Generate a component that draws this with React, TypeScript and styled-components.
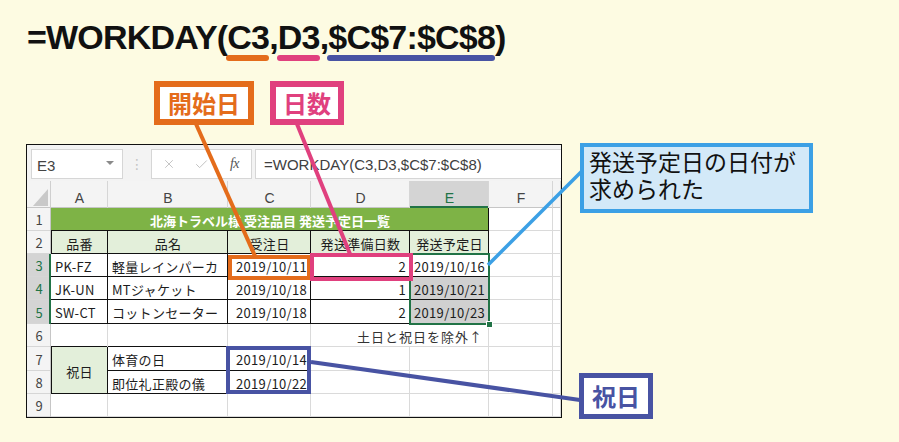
import React from 'react';
import styled, { createGlobalStyle } from 'styled-components';
import { X, Check } from 'lucide-react';

const ORANGE = '#E46C1B';
const PINK = '#E0407E';
const NAVY = '#4853A3';
const SKY = '#3CA0E5';
const GREEN = '#7EB346';
const LIGHT_GREEN = '#E3EFDA';
const GRID = '#DADADA';
const INK = '#1c1c1c';
const XL_GREEN = '#217346';

const Global = createGlobalStyle`
  html, body { margin: 0; padding: 0; background: #FDFBE2; }
  body { font-family: "Noto Sans CJK JP", "Noto Sans", sans-serif; }
`;

const Page = styled.div`
  position: relative;
  width: 899px;
  height: 442px;
  box-sizing: border-box;
  padding: 20px 0 0 27px;
  background: #FDFBE2;
  overflow: hidden;
`;

const Formula = styled.div`
  font-family: "Liberation Sans", Arial, sans-serif;
  font-weight: 700;
  font-size: 34px;
  line-height: 34px;
  height: 34px;
  letter-spacing: -0.8px;
  color: #111;
  white-space: nowrap;
`;

const Ref = styled.span<{ $c: string }>`
  position: relative;
  &::after {
    content: '';
    position: absolute;
    left: -1px;
    right: 0;
    bottom: -5px;
    height: 6px;
    border-radius: 3px;
    background: ${p => p.$c};
  }
`;

const Frame = styled.div`
  margin: 90px 0 0 -1px;
  width: 536px;
  height: 274px;
  box-sizing: border-box;
  border: 1px solid #111;
  background: #fff;
  display: flex;
  flex-direction: column;
`;

const FormulaStrip = styled.div`
  flex: none;
  height: 36px;
  box-sizing: border-box;
  padding: 4px 0 0 4px;
  background: #F3F3F3;
  display: flex;
  align-items: flex-start;
`;

const NameBox = styled.div`
  width: 92px;
  height: 30px;
  box-sizing: border-box;
  background: #fff;
  border: 1px solid #D6D6D6;
  display: flex;
  align-items: center;
  justify-content: space-between;
  padding: 2px 8px 0 5px;
  font-family: "Liberation Sans", Arial, sans-serif;
  font-size: 15px;
  color: #444;
`;

const DropArrow = styled.span`
  width: 0;
  height: 0;
  border-left: 4px solid transparent;
  border-right: 4px solid transparent;
  border-top: 4px solid #8a8a8a;
  margin-bottom: 4px;
`;

const Dots = styled.div`
  width: 28px;
  height: 30px;
  display: flex;
  align-items: center;
  justify-content: center;
  color: #C4C4C4;
  font-family: "DejaVu Sans", sans-serif;
  font-size: 14px;
`;

const FnBox = styled.div`
  width: 101px;
  height: 30px;
  box-sizing: border-box;
  background: #fff;
  border: 1px solid #D6D6D6;
  display: grid;
  grid-template-columns: repeat(3, 1fr);
  align-items: center;
  justify-items: center;
  color: #BDBDBD;
`;

const Fx = styled.span`
  font-family: "Liberation Serif", serif;
  font-style: italic;
  font-size: 14px;
  color: #555;
  letter-spacing: -0.5px;
`;

const FormulaInput = styled.div`
  flex: 1;
  margin-left: 3px;
  height: 30px;
  box-sizing: border-box;
  background: #fff;
  border: 1px solid #D6D6D6;
  border-right: none;
  display: flex;
  align-items: center;
  padding: 1px 0 0 8px;
  font-family: "Liberation Sans", Arial, sans-serif;
  font-size: 15px;
  color: #404040;
  white-space: nowrap;
`;

const Sheet = styled.div`
  flex: 1;
  display: grid;
  grid-template-columns: 24px 57px 120px 83px 99px 79px 64px 8px;
  grid-template-rows: 27px 23px 23px 23px 23px 24px 23px 24px 23px 23px;
  background: #fff;
`;

const HeadBase = styled.div<{ $sel?: boolean }>`
  background: ${p => (p.$sel ? '#D4D4D4' : '#F4F4F4')};
  display: flex;
  align-items: center;
  justify-content: center;
  font-family: "Liberation Sans", Arial, sans-serif;
  font-size: 14px;
  color: ${p => (p.$sel ? XL_GREEN : '#444')};
`;

const Corner = styled(HeadBase)`
  position: relative;
  box-shadow: inset -1px 0 0 #CFCFCF, inset 0 -1px 0 #C6C6C6;
  &::after {
    content: '';
    position: absolute;
    right: 3px;
    bottom: 2px;
    width: 15px;
    height: 17px;
    background: #C9C9C9;
    clip-path: polygon(100% 0, 100% 100%, 0 100%);
  }
`;

const ColHead = styled(HeadBase)`
  padding-top: 6px;
  box-shadow: inset -1px 0 0 #D6D6D6,
    ${p => (p.$sel ? `inset 0 -2px 0 ${XL_GREEN}` : 'inset 0 -1px 0 #C6C6C6')};
`;

const RowHead = styled(HeadBase)<{ $r: number }>`
  grid-column: 1;
  grid-row: ${p => p.$r};
  font-family: "Noto Sans CJK JP", sans-serif;
  font-size: 13px;
  box-shadow: ${p => (p.$sel ? `inset -2px 0 0 ${XL_GREEN}` : 'inset -1px 0 0 #C6C6C6')},
    inset 0 -1px 0 #D6D6D6;
`;

type CellProps = {
  $c: number;
  $r: number;
  $cs?: number;
  $rs?: number;
  $bg?: string;
  $br?: string;
  $bb?: string;
  $bl?: string;
  $align?: 'left' | 'center' | 'right';
};

const Cell = styled.div<CellProps>`
  grid-column: ${p => p.$c} / span ${p => p.$cs ?? 1};
  grid-row: ${p => p.$r} / span ${p => p.$rs ?? 1};
  background: ${p => p.$bg ?? '#fff'};
  box-shadow: inset -1px 0 0 ${p => p.$br ?? GRID}, inset 0 -1px 0 ${p => p.$bb ?? GRID}
    ${p => (p.$bl ? `, inset 1px 0 0 ${p.$bl}` : '')};
  display: flex;
  align-items: center;
  justify-content: ${p => (p.$align === 'right' ? 'flex-end' : p.$align === 'center' ? 'center' : 'flex-start')};
  padding: 1px 4px 0 4px;
  box-sizing: border-box;
  font-size: 13px;
  line-height: 1;
  letter-spacing: 0.3px;
  color: ${INK};
  white-space: nowrap;
  overflow: hidden;
`;

const TitleCell = styled(Cell)`
  font-weight: 700;
  color: #fff;
  letter-spacing: 0;
`;

const NoteCell = styled(Cell)`
  padding-right: 6px;
  color: #333;
  letter-spacing: 1px;
`;

const Mark = styled.div<{ $c: number; $r: number; $rs?: number; $color: string; $m: string }>`
  grid-column: ${p => p.$c};
  grid-row: ${p => p.$r} / span ${p => p.$rs ?? 1};
  margin: ${p => p.$m};
  border: 4px solid ${p => p.$color};
  z-index: 3;
  pointer-events: none;
`;

const Selection = styled.div`
  grid-column: 6;
  grid-row: 4 / span 3;
  margin: -1px -1px -1px -1px;
  border: 2px solid ${XL_GREEN};
  position: relative;
  z-index: 2;
  pointer-events: none;
  &::after {
    content: '';
    position: absolute;
    right: -5px;
    bottom: -5px;
    width: 5px;
    height: 5px;
    background: ${XL_GREEN};
    border: 1px solid #fff;
  }
`;

const Leaders = styled.svg`
  position: absolute;
  left: 0;
  top: 0;
  width: 899px;
  height: 442px;
  z-index: 5;
  pointer-events: none;
`;

const Tag = styled.div<{ $color: string; $left: number; $top: number; $w: number }>`
  position: absolute;
  left: ${p => p.$left}px;
  top: ${p => p.$top}px;
  width: ${p => p.$w}px;
  height: 44px;
  box-sizing: border-box;
  border: 6px solid ${p => p.$color};
  background: #fff;
  display: flex;
  align-items: center;
  justify-content: center;
  font-weight: 700;
  font-size: 24px;
  line-height: 1;
  color: ${p => p.$color};
  z-index: 6;
`;

const ResultCallout = styled.div`
  position: absolute;
  left: 580px;
  top: 143px;
  width: 233px;
  height: 70px;
  box-sizing: border-box;
  border: 4px solid ${SKY};
  background: #D3E9F8;
  padding: 3px 0 0 5px;
  display: flex;
  flex-direction: column;
  z-index: 6;
`;

const CalloutLine = styled.div`
  height: 27px;
  font-family: "Liberation Sans", "Noto Sans CJK JP", sans-serif;
  font-size: 23px;
  font-weight: 400;
  line-height: 27px;
  color: #111;
  white-space: nowrap;
`;

const HolidayCallout = styled.div`
  position: absolute;
  left: 579px;
  top: 373px;
  width: 74px;
  height: 46px;
  box-sizing: border-box;
  border: 5px solid ${NAVY};
  background: #fff;
  display: flex;
  align-items: center;
  justify-content: center;
  font-weight: 700;
  font-size: 24px;
  line-height: 1;
  color: ${NAVY};
  z-index: 6;
`;

const cols = ['A', 'B', 'C', 'D', 'E', 'F'];

type Row = { a: string; b: string; c: string; d: string; e: string; sel?: boolean };
const items: Row[] = [
  { a: 'PK-FZ', b: '軽量レインパーカ', c: '2019/10/11', d: '2', e: '2019/10/16' },
  { a: 'JK-UN', b: 'MTジャケット', c: '2019/10/18', d: '1', e: '2019/10/21', sel: true },
  { a: 'SW-CT', b: 'コットンセーター', c: '2019/10/18', d: '2', e: '2019/10/23', sel: true },
];

const heads = ['品番', '品名', '受注日', '発送準備日数', '発送予定日'];
const B = '#111';

export default function App() {
  return (
    <>
      <Global />
      <Page>
        <Formula>
          =WORKDAY(<Ref $c={ORANGE}>C3</Ref>,<Ref $c={PINK}>D3</Ref>,<Ref $c={NAVY}>$C$7:$C$8</Ref>)
        </Formula>

        <Frame>
          <FormulaStrip>
            <NameBox>
              E3
              <DropArrow />
            </NameBox>
            <Dots>⋮</Dots>
            <FnBox>
              <X size={14} strokeWidth={1.5} />
              <Check size={15} strokeWidth={1.5} />
              <Fx>fx</Fx>
            </FnBox>
            <FormulaInput>=WORKDAY(C3,D3,$C$7:$C$8)</FormulaInput>
          </FormulaStrip>

          <Sheet>
            <Corner />
            {cols.map(c => (
              <ColHead key={c} $sel={c === 'E'}>{c}</ColHead>
            ))}
            <ColHead />

            {Array.from({ length: 9 }, (_, i) => (
              <RowHead key={i} $r={i + 2} $sel={i >= 2 && i <= 4}>{i + 1}</RowHead>
            ))}

            {/* row 1 */}
            <TitleCell $c={2} $r={2} $cs={5} $bg={GREEN} $br={B} $bb={B} $align="center">
              北海トラベル様 受注品目 発送予定日一覧
            </TitleCell>
            <Cell $c={7} $r={2} />
            <Cell $c={8} $r={2} />

            {/* row 2 */}
            {heads.map((h, i) => (
              <Cell key={h} $c={i + 2} $r={3} $bg={LIGHT_GREEN} $br={B} $bb={B} $bl={i === 0 ? B : undefined} $align="center">
                {h}
              </Cell>
            ))}
            <Cell $c={7} $r={3} />
            <Cell $c={8} $r={3} />

            {/* rows 3-5 */}
            {items.map((it, i) => (
              <React.Fragment key={it.a}>
                <Cell $c={2} $r={i + 4} $br={B} $bb={B}>{it.a}</Cell>
                <Cell $c={3} $r={i + 4} $br={B} $bb={B}>{it.b}</Cell>
                <Cell $c={4} $r={i + 4} $br={B} $bb={B} $align="right">{it.c}</Cell>
                <Cell $c={5} $r={i + 4} $br={B} $bb={B} $align="right">{it.d}</Cell>
                <Cell $c={6} $r={i + 4} $br={B} $bb={B} $align="right" $bg={it.sel ? '#D0D0D0' : '#fff'}>{it.e}</Cell>
                <Cell $c={7} $r={i + 4} />
                <Cell $c={8} $r={i + 4} />
              </React.Fragment>
            ))}

            {/* row 6 */}
            <Cell $c={2} $r={7} $bb={B} />
            <Cell $c={3} $r={7} $bb={B} />
            <Cell $c={4} $r={7} $bb={B} />
            <NoteCell $c={5} $r={7} $cs={2} $align="right">土日と祝日を除外↑</NoteCell>
            <Cell $c={7} $r={7} />
            <Cell $c={8} $r={7} />

            {/* rows 7-8 */}
            <Cell $c={2} $r={8} $rs={2} $bg={LIGHT_GREEN} $br={B} $bb={B} $bl={B} $align="center">祝日</Cell>
            <Cell $c={3} $r={8} $br={B} $bb={B}>体育の日</Cell>
            <Cell $c={4} $r={8} $br={B} $bb={B} $align="right">2019/10/14</Cell>
            <Cell $c={3} $r={9} $br={B} $bb={B}>即位礼正殿の儀</Cell>
            <Cell $c={4} $r={9} $br={B} $bb={B} $align="right">2019/10/22</Cell>
            {[8, 9].map(r => (
              <React.Fragment key={r}>
                <Cell $c={5} $r={r} />
                <Cell $c={6} $r={r} />
                <Cell $c={7} $r={r} />
                <Cell $c={8} $r={r} />
              </React.Fragment>
            ))}

            {/* row 9 */}
            {[2, 3, 4, 5, 6, 7, 8].map(c => (
              <Cell key={c} $c={c} $r={10} />
            ))}

            <Selection />
            <Mark $c={4} $r={4} $color={ORANGE} $m="1px 0 -3px 0" />
            <Mark $c={5} $r={4} $color={PINK} $m="-1px -3px -4px -1px" />
            <Mark $c={4} $r={8} $rs={2} $color={NAVY} $m="-1px 0 0 -2px" />
          </Sheet>
        </Frame>

        <Leaders viewBox="0 0 899 442">
          <line x1="196" y1="124" x2="255" y2="256" stroke={ORANGE} strokeWidth="4" />
          <line x1="297" y1="124" x2="350" y2="254" stroke={PINK} strokeWidth="4" />
          <line x1="488" y1="265" x2="583" y2="170" stroke={SKY} strokeWidth="3.5" />
          <line x1="311" y1="362" x2="580" y2="400" stroke={NAVY} strokeWidth="4" />
        </Leaders>

        <Tag $color={ORANGE} $left={154} $top={81} $w={100}>開始日</Tag>
        <Tag $color={PINK} $left={270} $top={81} $w={74}>日数</Tag>

        <ResultCallout>
          <CalloutLine>発送予定日の日付が</CalloutLine>
          <CalloutLine>求められた</CalloutLine>
        </ResultCallout>
        <HolidayCallout>祝日</HolidayCallout>
      </Page>
    </>
  );
}
